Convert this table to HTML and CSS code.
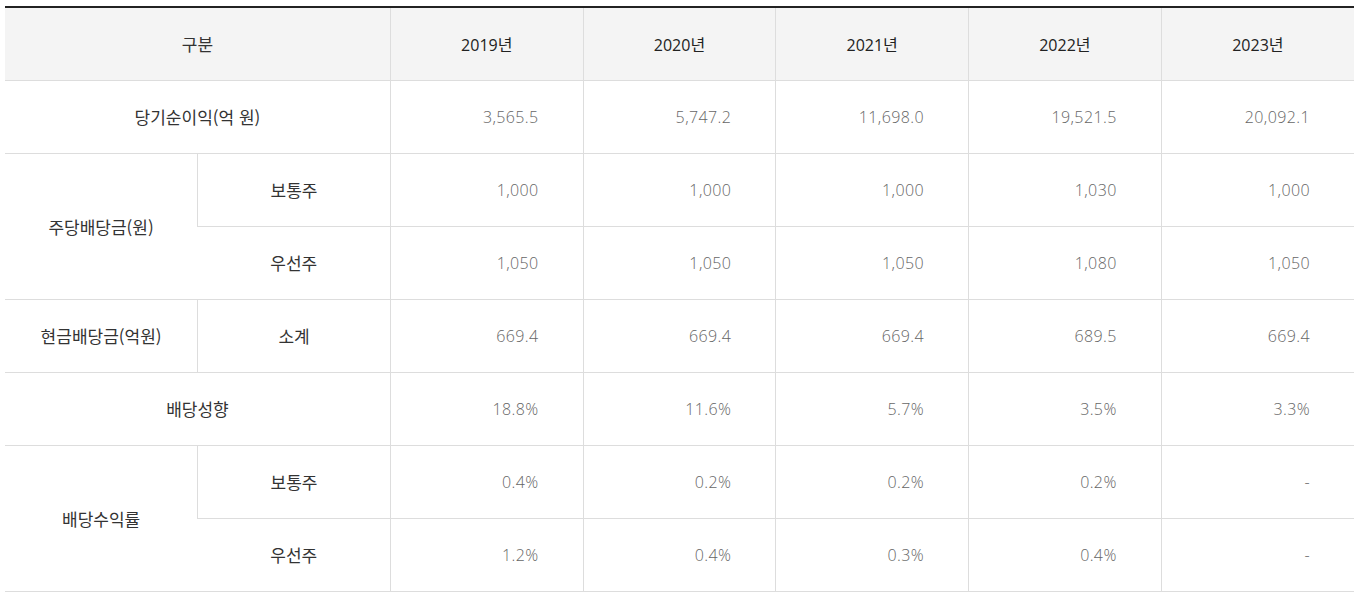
FILE: index.html
```html
<!DOCTYPE html>
<html lang="ko">
<head>
<meta charset="utf-8">
<title>배당 현황</title>
<link rel="stylesheet" href="styles.css">
</head>
<body>
<div class="wrap">
<table class="div-table">
  <colgroup>
    <col class="c"><col class="c"><col class="c"><col class="c"><col class="c"><col class="c"><col class="c">
  </colgroup>
  <thead>
    <tr>
      <th colspan="2" class="kr">구분</th>
      <th>2019년</th>
      <th>2020년</th>
      <th>2021년</th>
      <th>2022년</th>
      <th>2023년</th>
    </tr>
  </thead>
  <tbody>
    <tr>
      <th colspan="2" class="lbl">당기순이익(억 원)</th>
      <td>3,565.5</td><td>5,747.2</td><td>11,698.0</td><td>19,521.5</td><td>20,092.1</td>
    </tr>
    <tr>
      <th rowspan="2" class="lbl">주당배당금(원)</th>
      <th class="lbl sub">보통주</th>
      <td>1,000</td><td>1,000</td><td>1,000</td><td>1,030</td><td>1,000</td>
    </tr>
    <tr>
      <th class="lbl sub">우선주</th>
      <td>1,050</td><td>1,050</td><td>1,050</td><td>1,080</td><td>1,050</td>
    </tr>
    <tr>
      <th class="lbl">현금배당금(억원)</th>
      <th class="lbl sub">소계</th>
      <td>669.4</td><td>669.4</td><td>669.4</td><td>689.5</td><td>669.4</td>
    </tr>
    <tr>
      <th colspan="2" class="lbl">배당성향</th>
      <td>18.8%</td><td>11.6%</td><td>5.7%</td><td>3.5%</td><td>3.3%</td>
    </tr>
    <tr>
      <th rowspan="2" class="lbl">배당수익률</th>
      <th class="lbl sub">보통주</th>
      <td>0.4%</td><td>0.2%</td><td>0.2%</td><td>0.2%</td><td>-</td>
    </tr>
    <tr>
      <th class="lbl sub">우선주</th>
      <td>1.2%</td><td>0.4%</td><td>0.3%</td><td>0.4%</td><td>-</td>
    </tr>
  </tbody>
</table>
</div>
</body>
</html>
```

FILE: styles.css
```css
html, body {
  margin: 0;
  padding: 0;
  background: #fff;
}

.wrap {
  padding: 6px 6px 0 5px;
}

.div-table {
  width: 1349px;
  border-collapse: collapse;
  table-layout: fixed;
  border-top: 2px solid #222;
  font-family: "Noto Sans CJK KR", "Noto Sans", sans-serif;
  font-size: 17px;
  color: #333;
}

.div-table .c {
  width: 192.7px;
}

.div-table th,
.div-table td {
  height: 73px;
  padding: 0;
  border-bottom: 1px solid #ddd;
  border-left: 1px solid #ddd;
  vertical-align: middle;
  box-sizing: border-box;
}

.div-table tr > :first-child {
  border-left: none;
}

.div-table thead th {
  background: #f4f4f4;
  font-weight: 400;
  text-align: center;
  color: #222;
  font-family: "Open Sans", "Noto Sans CJK KR", sans-serif;
  font-size: 16px;
}

.div-table thead th.kr {
  font-family: "Noto Sans CJK KR", sans-serif;
  font-size: 17px;
  color: #333;
}

.div-table .lbl {
  font-weight: 400;
  text-align: center;
  color: #333;
}

.div-table .sub {
  border-left: 1px solid #ddd;
}

.div-table td {
  text-align: right;
  padding-right: 44px;
  color: #666;
  font-family: "Open Sans", sans-serif;
  font-size: 16px;
  font-weight: 300;
  letter-spacing: 0.4px;
}
```
